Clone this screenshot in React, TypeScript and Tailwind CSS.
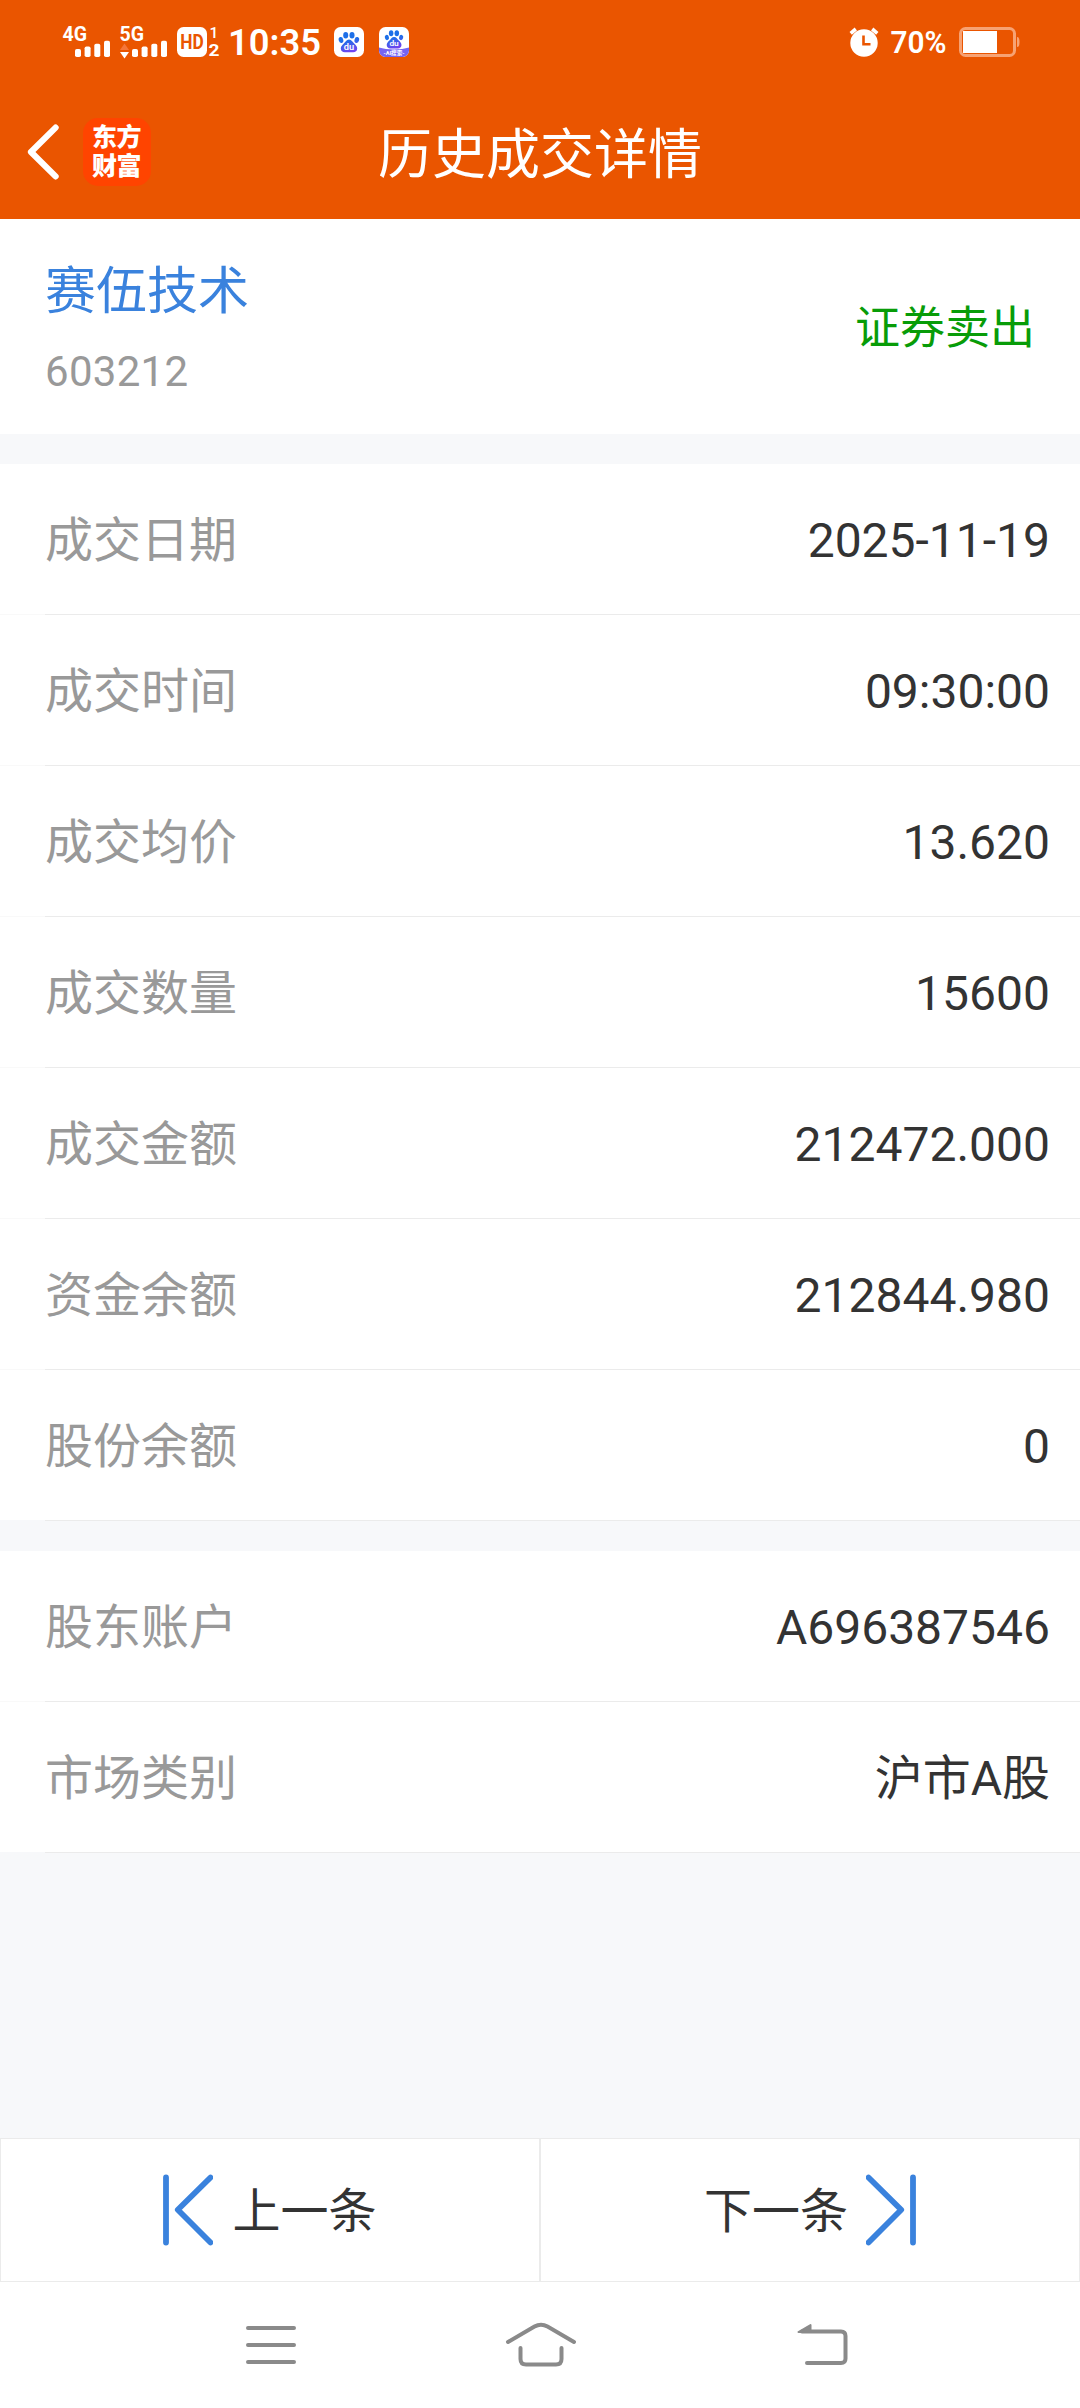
import clsx from 'clsx'

type Field = { label: string; value: string }

const tradeFields: Field[] = [
  { label: '成交日期', value: '2025-11-19' },
  { label: '成交时间', value: '09:30:00' },
  { label: '成交均价', value: '13.620' },
  { label: '成交数量', value: '15600' },
  { label: '成交金额', value: '212472.000' },
  { label: '资金余额', value: '212844.980' },
  { label: '股份余额', value: '0' },
]

const accountFields: Field[] = [
  { label: '股东账户', value: 'A696387546' },
  { label: '市场类别', value: '沪市A股' },
]

function Signal({ label, arrows }: { label: string; arrows?: boolean }) {
  return (
    <svg width="49" height="36" viewBox="0 0 49 36" fill="#fff" className="overflow-visible">
      <text x="0.5" y="17.3" fontSize="21" fontWeight="700" textLength="24.5" lengthAdjust="spacingAndGlyphs">{label}</text>
      {arrows && (
        <>
          <path d="M5.5 19.5 10 26H1z" fill="#f4763a" />
          <path d="M5.5 34.5 10 28H1z" />
        </>
      )}
      <rect x="13" y="25" width="6" height="8" rx="1.8" />
      <rect x="22.6" y="22.5" width="6" height="10.5" rx="1.8" />
      <rect x="32.3" y="19.7" width="6" height="13.3" rx="1.8" />
      <rect x="42" y="16.7" width="6" height="16.3" rx="1.8" />
    </svg>
  )
}

function HdBadge() {
  return (
    <svg width="44" height="32" viewBox="0 0 44 32" fill="#fff" className="overflow-visible">
      <rect x="0" y="1" width="30" height="30" rx="6.5" />
      <text x="3.2" y="23.2" fontSize="20" fontWeight="700" fill="#ea5500" textLength="23.5" lengthAdjust="spacingAndGlyphs">HD</text>
      <text x="32.5" y="12.2" fontSize="15.5" fontWeight="500">1</text>
      <text x="31.6" y="30" fontSize="17" fontWeight="700" textLength="11" lengthAdjust="spacingAndGlyphs">2</text>
    </svg>
  )
}

function Paw() {
  return (
    <>
      <ellipse cx="11.7" cy="8.2" rx="2.5" ry="3.3" />
      <ellipse cx="18" cy="8.2" rx="2.5" ry="3.3" />
      <ellipse cx="7" cy="13" rx="2.3" ry="3" transform="rotate(-15 7 13)" />
      <ellipse cx="22.8" cy="13" rx="2.3" ry="3" transform="rotate(15 22.8 13)" />
      <path d="M15 12.4c2.6 0 3.6 2.4 5.2 4 1.8 1.7 3 3 3 5 0 2.5-1.8 3.8-4 3.8h-8.4c-2.2 0-4-1.3-4-3.8 0-2 1.2-3.3 3-5 1.6-1.6 2.6-4 5.2-4z" />
      <text x="9.8" y="23" fontSize="9" fontWeight="600" fill="#fff" textLength="10.4" lengthAdjust="spacingAndGlyphs">du</text>
    </>
  )
}

function Baidu({ lite }: { lite?: boolean }) {
  return (
    <svg width="30" height="30" viewBox="0 0 30 30" className="overflow-visible">
      <defs>
        <linearGradient id="paw" gradientUnits="userSpaceOnUse" x1="12" y1="4" x2="18" y2="26">
          <stop offset="0.4" stopColor="#1d6fe8" />
          <stop offset="1" stopColor="#7a3ff0" />
        </linearGradient>
        <clipPath id="tile">
          <rect width="30" height="30" rx="6.5" />
        </clipPath>
      </defs>
      <rect width="30" height="30" rx="6.5" fill="#fff" />
      {lite ? (
        <>
          <path d="M0 20.5c8 2.5 22 2.5 30 0V30H0z" fill="#7664f2" clipPath="url(#tile)" />
          <g fill="url(#paw)" transform="translate(1.6 -1.2) scale(.9)">
            <Paw />
          </g>
          <text x="4.5" y="28.3" fontSize="6" fontWeight="700" fill="#fff" textLength="21" lengthAdjust="spacingAndGlyphs">-AI搜索-</text>
        </>
      ) : (
        <g fill="url(#paw)">
          <Paw />
        </g>
      )}
    </svg>
  )
}

function StatusBar() {
  return (
    <div className="flex h-[84px] items-center justify-between pr-[60px] pl-[62px]">
      <div className="flex items-center">
        <Signal label="4G" />
        <div className="ml-2 flex">
          <Signal label="5G" arrows />
        </div>
        <div className="ml-[9px]">
          <HdBadge />
        </div>
        <svg width="94" height="48" viewBox="0 -6 94 48" className="ml-[7px] overflow-visible" fill="#fff">
          <text x="0" y="30.5" fontSize="36.5" fontWeight="600" textLength="93" lengthAdjust="spacingAndGlyphs">10:35</text>
        </svg>
        <div className="ml-[12px]">
          <Baidu />
        </div>
        <div className="ml-[15px]">
          <Baidu lite />
        </div>
      </div>
      <div className="flex items-center">
        <svg width="30" height="30" viewBox="0 0 30 30" fill="none">
          <circle cx="15" cy="16" r="13.7" fill="#fff" />
          <path d="M1.7 6.3 6.8 2M28.3 6.3 23.2 2" stroke="#fff" strokeWidth="3.6" />
          <path d="M14.5 8.5v8.7h7" stroke="#ea5500" strokeWidth="2.6" />
        </svg>
        <svg width="57" height="42" viewBox="0 -6 57 42" className="ml-[11px] overflow-visible" fill="#fff">
          <text x="0.5" y="26" fontSize="31" fontWeight="600" textLength="56" lengthAdjust="spacingAndGlyphs">70%</text>
        </svg>
        <svg width="61" height="30" viewBox="0 0 61 30" className="ml-[12px]" fill="none">
          <rect x="1.5" y="1.5" width="54" height="27" rx="5" stroke="#f7a273" strokeWidth="3" />
          <rect x="4" y="4" width="34" height="22" fill="#fff" />
          <path d="M58 10c2 0 2.5 2 2.5 5s-.5 5-2.5 5z" fill="#f7a273" />
        </svg>
      </div>
    </div>
  )
}

function TitleBar() {
  return (
    <div className="grid h-[135px] grid-cols-[1fr_auto_1fr] items-center">
      <div className="flex items-center pl-[27px]">
        <svg width="33" height="56" viewBox="0 0 33 56" fill="none" stroke="#fff" strokeWidth="6.2" strokeLinecap="round">
          <path d="M28.6 3.6 4 28l24.6 24.4" strokeLinejoin="round" />
        </svg>
        <div className="ml-[23px] flex h-[68px] w-[68px] flex-col items-center justify-center rounded-[15px] bg-[#ff4400] pr-[1px] text-[25px] leading-[29px] font-black tracking-[-0.5px] text-white">
          <span>东方</span>
          <span>财富</span>
        </div>
      </div>
      <h1 className="pt-[8px] text-[54px] leading-[60px] text-white">历史成交详情</h1>
    </div>
  )
}

function FieldList({ fields }: { fields: Field[] }) {
  return (
    <ul>
      {fields.map((item, i) => (
        <li key={item.label}>
          <div className="flex h-[150px] items-center justify-between bg-white pt-[3px] pr-[30px] pl-[45px] text-[48px] leading-[60px]">
            <span className="text-[#999999]">{item.label}</span>
            <span className="text-[#333333]">{item.value}</span>
          </div>
          <div className={clsx('h-px pl-[45px]', i < fields.length - 1 && 'bg-[#f9f9f9]')}>
            <div className="h-px bg-[#ebebeb]" />
          </div>
        </li>
      ))}
    </ul>
  )
}

function Pager() {
  return (
    <div className="grid h-[144px] grid-cols-2 bg-white text-[48px] leading-[60px] text-[#333333]">
      <button className="flex items-center justify-center gap-[19px] border border-[#ebebeb]">
        <svg width="50" height="72" viewBox="0 0 50 72" fill="none" stroke="#3a82dd" strokeWidth="5.8" strokeLinecap="round" strokeLinejoin="round">
          <path d="M3 3.5v65M47.5 3.5 14.8 35.8l32.7 32.7" />
        </svg>
        <span className="pt-[3px]">上一条</span>
      </button>
      <button className="flex items-center justify-center gap-[18px] border border-[#ebebeb]">
        <span className="pt-[3px]">下一条</span>
        <svg width="50" height="72" viewBox="0 0 50 72" fill="none" stroke="#3a82dd" strokeWidth="5.8" strokeLinecap="round" strokeLinejoin="round">
          <path d="M47 3.5v65M2.5 3.5l32.7 32.3L2.5 68.5" />
        </svg>
      </button>
    </div>
  )
}

function NavBar() {
  return (
    <div className="flex h-[126px] items-center bg-white pl-[245px]">
      <svg width="52" height="46" viewBox="0 0 52 46" stroke="#8a8a8a" strokeWidth="4" strokeLinecap="round">
        <path d="M3 6h46M3 23h46M3 40h46" />
      </svg>
      <svg width="72" height="46" viewBox="0 0 72 46" fill="none" stroke="#8a8a8a" strokeWidth="4" strokeLinecap="round" className="ml-[208px]">
        <path d="M3 20 29.5 4.6Q36 1 42.5 4.6L69 20M15.5 26v11q0 5.5 5.5 5.5h30q5.5 0 5.5-5.5V26" />
      </svg>
      <svg width="54" height="46" viewBox="0 0 54 46" fill="none" stroke="#8a8a8a" strokeWidth="4" strokeLinecap="round" className="ml-[219px]">
        <path d="M6 9.5h39q4.500 0 4.500 4.500v22.500q0 4.500-4.500 4.500H11" />
        <path d="M2.5 10 14.500 3v7z" fill="#8a8a8a" strokeWidth="2" strokeLinejoin="round" />
      </svg>
    </div>
  )
}

export default function App() {
  return (
    <div className="flex h-[2408px] w-[1080px] flex-col bg-[#f7f8fa] font-['Roboto','Noto_Sans_CJK_SC',sans-serif]">
      <header className="bg-[#ea5500]">
        <StatusBar />
        <TitleBar />
      </header>

      <section className="flex h-[215px] items-start justify-between bg-white px-[45px]">
        <div className="pt-[43px]">
          <h2 className="text-[51px] leading-[60px] text-[#3a82dd]">赛伍技术</h2>
          <p className="mt-[20px] text-[42px] leading-[60px] tracking-[0.3px] text-[#999999]">603212</p>
        </div>
        <span className="pt-[80px] text-[45px] leading-[60px] text-[#089c08]">证券卖出</span>
      </section>

      <main className="mt-[30px] flex flex-1 flex-col gap-[30px]">
        <FieldList fields={tradeFields} />
        <FieldList fields={accountFields} />
      </main>

      <Pager />
      <NavBar />
    </div>
  )
}
